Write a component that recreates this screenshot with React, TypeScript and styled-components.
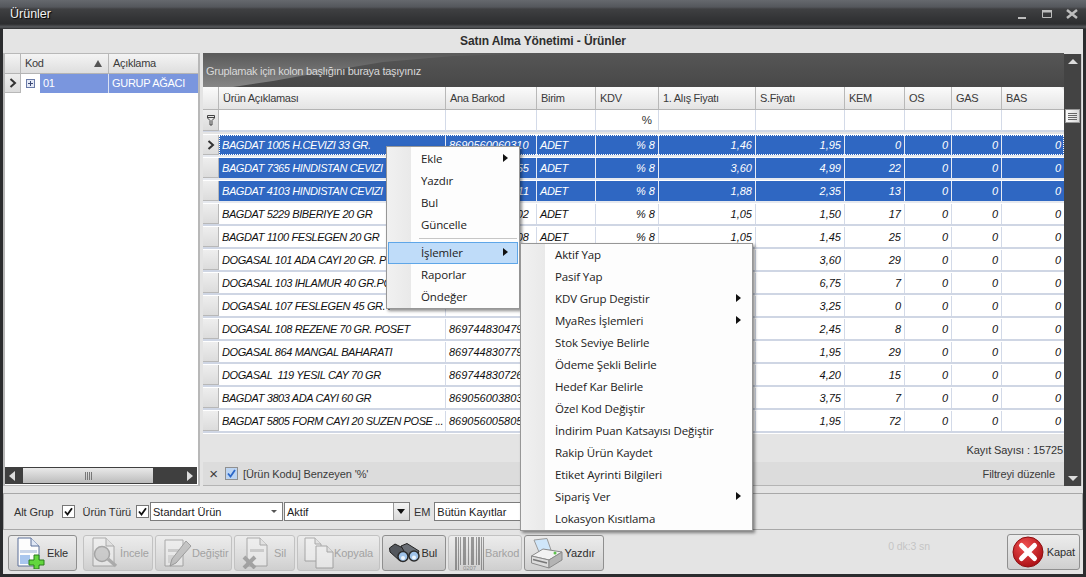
import React from "react";
import styled, { createGlobalStyle } from "styled-components";

const COLS = "16px 227px 91px 59px 63px 97px 89px 60px 47px 50px 62px";

// cells that sit behind the context menus are left empty
type RowData = {
  name: string;
  barcode: string;
  tail?: boolean;
  unit: boolean;
  buy: string;
  sell: string;
  kem: string;
};

const rows: RowData[] = [
  { name: "BAGDAT 1005 H.CEVIZI 33 GR.", barcode: "8690560060310", unit: true, buy: "1,46", sell: "1,95", kem: "0" },
  { name: "BAGDAT 7365 HINDISTAN CEVIZI", barcode: "55", tail: true, unit: true, buy: "3,60", sell: "4,99", kem: "22" },
  { name: "BAGDAT 4103 HINDISTAN CEVIZI", barcode: "11", tail: true, unit: true, buy: "1,88", sell: "2,35", kem: "13" },
  { name: "BAGDAT 5229 BIBERIYE 20 GR", barcode: "02", tail: true, unit: true, buy: "1,05", sell: "1,50", kem: "17" },
  { name: "BAGDAT 1100 FESLEGEN 20 GR", barcode: "08", tail: true, unit: true, buy: "1,05", sell: "1,45", kem: "25" },
  { name: "DOGASAL 101 ADA CAYI 20 GR. P", barcode: "", unit: false, buy: "", sell: "3,60", kem: "29" },
  { name: "DOGASAL 103 IHLAMUR 40 GR.PO", barcode: "", unit: false, buy: "", sell: "6,75", kem: "7" },
  { name: "DOGASAL 107 FESLEGEN 45 GR. P", barcode: "", unit: false, buy: "", sell: "3,25", kem: "0" },
  { name: "DOGASAL 108 REZENE 70 GR. POSET", barcode: "869744830479", unit: false, buy: "", sell: "2,45", kem: "8" },
  { name: "DOGASAL 864 MANGAL BAHARATI", barcode: "869744830779", unit: false, buy: "", sell: "1,95", kem: "29" },
  { name: "DOGASAL  119 YESIL CAY 70 GR", barcode: "869744830726", unit: false, buy: "", sell: "4,20", kem: "15" },
  { name: "BAGDAT 3803 ADA CAYI 60 GR", barcode: "869056003803", unit: false, buy: "", sell: "3,75", kem: "7" },
  { name: "BAGDAT 5805 FORM CAYI 20 SUZEN POSE ...", barcode: "869056005805", unit: false, buy: "", sell: "1,95", kem: "72" },
];

const submenuItems: [string, boolean][] = [
  ["Aktif Yap", false],
  ["Pasif Yap", false],
  ["KDV Grup Degistir", true],
  ["MyaRes İşlemleri", true],
  ["Stok Seviye Belirle", false],
  ["Ödeme Şekli Belirle", false],
  ["Hedef Kar Belirle", false],
  ["Özel Kod Değiştir", false],
  ["İndirim Puan Katsayısı Değiştir", false],
  ["Rakip Ürün Kaydet", false],
  ["Etiket Ayrinti Bilgileri", false],
  ["Sipariş Ver", true],
  ["Lokasyon Kısıtlama", false],
];

const Global = createGlobalStyle`
  html, body { margin: 0; padding: 0; background: #2b2c2e; }
  body { font-family: "Liberation Sans", Arial, sans-serif; font-size: 11px; letter-spacing: -0.1px; color: #333; }
`;

const Window = styled.div`
  position: relative;
  width: 1086px;
  height: 577px;
  overflow: hidden;
  display: flex;
  flex-direction: column;
  background: #2b2c2e;
`;

const TitleBar = styled.div`
  height: 29px;
  box-sizing: border-box;
  flex: none;
  display: flex;
  align-items: center;
  justify-content: space-between;
  padding: 0 7px 1px 10px;
  color: #f2f2f2;
  font-size: 12.5px;
  letter-spacing: 0;
  text-shadow: 1px 1px 1px #000;
  background: linear-gradient(#66696e 0, #54575c 7px, #3f4042 9px, #2c2d2f 24px, #57595c 27px, #2b2c2e 29px);
`;

const WinButtons = styled.div`
  display: flex;
  gap: 11px;
  align-items: center;
`;

const Body = styled.div`
  flex: 1;
  margin: 0 3px 3px;
  background: #e4e4e4;
  display: flex;
  flex-direction: column;
  min-height: 0;
`;

const Heading = styled.div`
  height: 24px;
  flex: none;
  text-align: center;
  line-height: 24px;
  font-weight: bold;
  font-size: 12px;
  color: #2e2e2e;
`;

const Main = styled.div`
  height: 433px;
  flex: none;
  display: flex;
  gap: 3px;
`;

const LeftPanel = styled.div`
  width: 197px;
  box-sizing: border-box;
  border: 1px solid #b8b8b8;
  border-width: 1px 2px 1px 2px;
  background: #fff;
  display: flex;
  flex-direction: column;
`;

const LeftHeader = styled.div`
  display: grid;
  grid-template-columns: 16px 88px 1fr;
  height: 19px;
  border-bottom: 1px solid #b4b4b4;
  background: linear-gradient(#f4f4f4, #dedede);
`;

const HeadCell = styled.div`
  box-sizing: border-box;
  padding: 0 4px;
  line-height: 19px;
  font-size: 11px;
  letter-spacing: -0.3px;
  color: #3a3a3a;
  white-space: nowrap;
  overflow: hidden;
  border-right: 1px solid #b8b8b8;
  display: flex;
  align-items: center;
  justify-content: space-between;
  &:last-child { border-right: 0; }
`;

const SortArrow = styled.span`
  width: 0;
  height: 0;
  border-left: 4px solid transparent;
  border-right: 4px solid transparent;
  border-bottom: 7px solid #555;
  margin-right: 2px;
`;

const LeftRow = styled.div`
  display: grid;
  grid-template-columns: 16px 19px 69px 1fr;
  height: 19px;
`;

const Indicator = styled.div`
  box-sizing: border-box;
  display: flex;
  align-items: center;
  justify-content: center;
  background: linear-gradient(#eeeeee, #dcdcdc);
  border-right: 1px solid #b8b8b8;
  border-bottom: 1px solid #b8b8b8;
`;

const Expander = styled.div`
  display: flex;
  align-items: center;
  justify-content: center;
`;

const LeftCell = styled.div`
  background: #7a96de;
  color: #fff;
  line-height: 19px;
  padding: 0 3px;
  font-size: 11px;
  letter-spacing: -0.3px;
  border-right: 1px solid #dbe2f3;
  white-space: nowrap;
  overflow: hidden;
  &:last-child { border-right: 0; }
`;

const LeftFill = styled.div`
  flex: 1;
`;

const HScroll = styled.div`
  height: 17px;
  margin: 0 1px 1px 0;
  background: #3f3f3f;
  display: flex;
  align-items: center;
  justify-content: space-between;
`;

const HThumb = styled.div`
  flex: 1;
  height: 15px;
  margin: 0 30px 0 4px;
  display: flex;
  align-items: center;
  justify-content: center;
  background: linear-gradient(#e9e9e9, #bcbcbc);
`;

const GripH = styled.div`
  width: 7px;
  height: 8px;
  background: repeating-linear-gradient(90deg, #777 0 1px, transparent 1px 2px);
`;

const ArrowBtn = styled.div<{ $dir: "left" | "right" }>`
  width: 0;
  height: 0;
  margin: 0 4px;
  border-top: 5px solid transparent;
  border-bottom: 5px solid transparent;
  ${(p) => (p.$dir === "left" ? "border-right: 6px solid #ddd;" : "border-left: 6px solid #ddd;")}
`;

const RightPanel = styled.div`
  flex: 1;
  display: flex;
  min-width: 0;
`;

const GridArea = styled.div`
  width: 861px;
  flex: none;
  display: flex;
  flex-direction: column;
`;

const GroupPanel = styled.div`
  height: 34px;
  flex: none;
  position: relative;
  overflow: hidden;
  background: linear-gradient(#565656, #484848);
  color: #d8d8d8;
  font-size: 11px;
  letter-spacing: -0.28px;
  line-height: 37px;
  padding-left: 3px;
  box-sizing: border-box;
  &::before {
    content: "";
    position: absolute;
    inset: 0;
    background: linear-gradient(#5a5a5a, #868686);
    clip-path: polygon(0 0, 337px 0, 250px 3px, 180px 9px, 120px 19px, 70px 28px, 30px 34px, 0 34px);
  }
`;

const GroupText = styled.span`
  position: relative;
`;

const GridHeader = styled.div`
  display: grid;
  grid-template-columns: ${COLS};
  height: 23px;
  flex: none;
  box-sizing: border-box;
  border-bottom: 1px solid #b4b4b4;
  border-top-right-radius: 5px;
  background: linear-gradient(#fbfbfb, #e4e4e4);
  ${HeadCell} { line-height: 22px; }
`;

const FilterRow = styled.div`
  display: grid;
  grid-template-columns: ${COLS};
  height: 22px;
  flex: none;
  box-sizing: border-box;
  background: #fff;
  border-bottom: 2px solid #cfd6e4;
  margin-bottom: 2px;
`;

const FilterCell = styled.div`
  border-right: 1px solid #d3dae8;
  text-align: right;
  padding-right: 6px;
  line-height: 21px;
  font-size: 11.5px;
  color: #333;
  &:last-child { border-right: 0; }
`;

const Rows = styled.div`
  flex: 1;
  display: flex;
  flex-direction: column;
  background: #fff;
  min-height: 0;
`;

const Row = styled.div<{ $selected?: boolean; $focus?: boolean }>`
  position: relative;
  display: grid;
  grid-template-columns: ${COLS};
  height: 23px;
  flex: none;
  box-sizing: border-box;
  border-top: 1px solid #fff;
  border-bottom: 2px solid ${(p) => (p.$selected ? "#e6e9ef" : "#cfd6e4")};
  color: ${(p) => (p.$selected ? "#fff" : "#111")};
  > div:not(:first-child) {
    background: ${(p) => (p.$selected ? "#2f67c2" : "#fff")};
    border-right-color: ${(p) => (p.$selected ? "#e6ebf5" : "#d3dae8")};
  }
  ${(p) =>
    p.$focus
      ? `&::after {
          content: "";
          position: absolute;
          inset: 0 0 0 16px;
          border: 1px dotted #fff;
        }`
      : ""}
`;

const Cell = styled.div<{ $right?: boolean; $tail?: boolean }>`
  box-sizing: border-box;
  padding: ${(p) => (p.$tail ? "0 7px 0 4px" : "0 3px")};
  line-height: 20px;
  font-style: italic;
  font-size: 11px;
  letter-spacing: -0.4px;
  white-space: pre;
  overflow: hidden;
  border-right: 1px solid #d3dae8;
  text-align: ${(p) => (p.$right || p.$tail ? "right" : "left")};
  &:last-child { border-right: 0; }
`;

const NumCell = styled(Cell)`
  letter-spacing: 0;
`;

const CountBar = styled.div`
  height: 28px;
  flex: none;
  display: flex;
  justify-content: flex-end;
  align-items: center;
  color: #333;
  font-size: 11px;
  padding: 3px 1px 0 0;
  box-sizing: border-box;
  background: #e4e4e4;
`;

const FilterStrip = styled.div`
  height: 24px;
  flex: none;
  display: flex;
  align-items: center;
  background: #dcdcdc;
  border-bottom: 1px solid #b4b4b4;
  padding: 0 9px 0 4px;
  box-sizing: border-box;
  font-size: 11px;
  color: #3b3b3b;
  gap: 5px;
`;

const CloseX = styled.span`
  font-size: 15px;
  line-height: 15px;
  width: 13px;
  text-align: center;
`;

const Spacer = styled.div`
  flex: 1;
`;

const CheckBlue = styled.span`
  width: 13px;
  height: 13px;
  box-sizing: border-box;
  border: 1px solid #8f8f8f;
  background: #fff;
  display: inline-flex;
  align-items: center;
  justify-content: center;
`;

const VScroll = styled.div`
  width: 17px;
  flex: none;
  margin: 1px 2px 0 0;
  border-right: 1px solid #c8c8c8;
  background: #434343;
  display: flex;
  flex-direction: column;
  align-items: center;
`;

const ScrollUp = styled.div`
  margin-top: 5px;
  width: 0;
  height: 0;
  border-left: 5px solid transparent;
  border-right: 5px solid transparent;
  border-bottom: 5px solid #ddd;
`;

const VThumb = styled.div`
  margin-top: 45px;
  width: 15px;
  height: 14px;
  display: flex;
  align-items: center;
  justify-content: center;
  background: linear-gradient(90deg, #fafafa, #d8d8d8);
  border: 1px solid #999;
  box-sizing: border-box;
`;

const GripV = styled.div`
  width: 9px;
  height: 7px;
  background: repeating-linear-gradient(180deg, #666 0 1px, transparent 1px 2px);
`;

const ScrollDown = styled.div`
  margin-top: auto;
  margin-bottom: 5px;
  width: 0;
  height: 0;
  border-left: 5px solid transparent;
  border-right: 5px solid transparent;
  border-top: 5px solid #ddd;
`;

const OptionBar = styled.div`
  height: 37px;
  flex: none;
  margin: 7px 0 0 0;
  box-sizing: border-box;
  border: 1px solid #a8a8a8;
  display: flex;
  align-items: center;
  padding-left: 10px;
  font-size: 11px;
  color: #333;
`;

const OptLabel = styled.span<{ $ml?: number }>`
  margin-left: ${(p) => p.$ml ?? 0}px;
`;

const CheckBox = styled.span<{ $ml: number }>`
  margin-left: ${(p) => p.$ml}px;
  width: 11px;
  height: 11px;
  border: 1px solid #777;
  background: #fff;
  display: inline-flex;
  align-items: center;
  justify-content: center;
`;

const Select = styled.div<{ $w: number; $ml: number }>`
  width: ${(p) => p.$w}px;
  margin-left: ${(p) => p.$ml}px;
  height: 19px;
  box-sizing: border-box;
  border: 1px solid #7c7c7c;
  background: #fff;
  display: flex;
  align-items: center;
  justify-content: space-between;
  padding-left: 2px;
  font-size: 11px;
  letter-spacing: 0;
  color: #222;
  white-space: nowrap;
  overflow: hidden;
`;

const SmallCaret = styled.span`
  width: 0;
  height: 0;
  margin-right: 5px;
  border-left: 3px solid transparent;
  border-right: 3px solid transparent;
  border-top: 3px solid #555;
`;

const DropBtn = styled.span`
  width: 15px;
  height: 17px;
  background: linear-gradient(#f4f4f4, #d9d9d9);
  border-left: 1px solid #999;
  display: flex;
  align-items: center;
  justify-content: center;
`;

const BigCaret = styled.span`
  width: 0;
  height: 0;
  border-left: 4px solid transparent;
  border-right: 4px solid transparent;
  border-top: 5px solid #111;
`;

const Toolbar = styled.div`
  flex: 1;
  display: flex;
  align-items: flex-start;
  padding: 5px 3px 0 5px;
  gap: 2px;
`;

const ToolBtn = styled.div<{ $w: number; $off?: boolean; $active?: boolean; $first?: boolean }>`
  width: ${(p) => p.$w}px;
  height: 36px;
  box-sizing: border-box;
  flex: none;
  border: 1px solid ${(p) => (p.$off ? "#c2c2c2" : "#8f8f8f")};
  border-radius: 3px;
  margin-right: ${(p) => (p.$first ? 4 : 0)}px;
  background: ${(p) =>
    p.$active
      ? "linear-gradient(#e2e2e2, #c4c4c4)"
      : "linear-gradient(#ececec, #dcdcdc 60%, #cfcfcf)"};
  display: flex;
  align-items: center;
  justify-content: space-between;
  padding: 0 8px 0 6px;
  font-size: 11px;
  color: ${(p) => (p.$off ? "#a2a2a2" : "#2e2e2e")};
  white-space: nowrap;
  overflow: hidden;
  svg { flex: none; opacity: ${(p) => (p.$off ? 0.55 : 1)}; }
`;

const Timer = styled.div`
  margin-left: auto;
  margin-right: 75px;
  margin-top: 5px;
  color: #c4c4c4;
  font-size: 10.5px;
`;

const KapatBtn = styled(ToolBtn)`
  margin-top: -1px;
  padding: 0 4px;
`;

const Menu = styled.div<{ $x: number; $y: number; $w: number; $top: number }>`
  position: absolute;
  left: ${(p) => p.$x}px;
  top: ${(p) => p.$y}px;
  width: ${(p) => p.$w}px;
  box-sizing: border-box;
  padding: ${(p) => p.$top}px 1px 0;
  border: 1px solid #979797;
  box-shadow: 2px 2px 3px rgba(0, 0, 0, 0.45);
  background: linear-gradient(90deg, #f1f1f1 0, #e9e9e9 24px, #fdfdfd 24px);
  font-family: "Open Sans", "Noto Sans", sans-serif;
  font-size: 11.5px;
  letter-spacing: -0.12px;
  color: #222;
  z-index: 2;
`;

const MenuItem = styled.div<{ $hover?: boolean }>`
  height: 22px;
  box-sizing: border-box;
  padding: 0 10px 2px 33px;
  display: flex;
  align-items: center;
  justify-content: space-between;
  white-space: nowrap;
  ${(p) => (p.$hover ? "background: #bfdcf9; outline: 1px solid #5ea6e8; outline-offset: -1px;" : "")}
`;

const MenuArrow = styled.span`
  width: 0;
  height: 0;
  border-top: 4px solid transparent;
  border-bottom: 4px solid transparent;
  border-left: 5px solid #111;
`;

const MenuSep = styled.div`
  height: 6px;
  position: relative;
  &::after {
    content: "";
    position: absolute;
    left: 31px;
    right: 1px;
    top: 2px;
    height: 1px;
    background: #c6c6c6;
  }
`;

const RowArrow = () => (
  <svg width="8" height="10" viewBox="0 0 8 10">
    <path d="M1.5 1 L6 5 L1.5 9" fill="none" stroke="#333" strokeWidth="2" />
  </svg>
);

const Tick = () => (
  <svg width="9" height="9" viewBox="0 0 9 9">
    <path d="M1 4.5 L3.5 7.5 L8 1.2" fill="none" stroke="#111" strokeWidth="1.8" />
  </svg>
);

const EkleIcon = () => (
  <svg width="30" height="32" viewBox="0 0 30 32">
    <path d="M3 1 H16 L24 9 V29 H3 Z" fill="#fdfdfd" stroke="#5b6f98" />
    <path d="M16 1 V9 H24" fill="#dfe7f5" stroke="#5b6f98" />
    <rect x="5" y="13" width="17" height="3" fill="#c8d4e8" />
    <rect x="5" y="18" width="10" height="9" fill="#a9c6ee" />
    <path d="M19 18 h5 v5 h5 v5 h-5 v4 h-5 v-4 h-5 v-5 h5 Z" fill="#63d63e" stroke="#2b7d1a" />
  </svg>
);

const IncelIcon = () => (
  <svg width="30" height="32" viewBox="0 0 30 32">
    <path d="M3 1 H16 L24 9 V29 H3 Z" fill="#f1f1f1" stroke="#777" />
    <path d="M16 1 V9 H24" fill="#ddd" stroke="#777" />
    <circle cx="12" cy="17" r="7.5" fill="#bbb" stroke="#777" strokeWidth="1.5" />
    <path d="M18 22 L26 29" stroke="#888" strokeWidth="3.5" />
  </svg>
);

const DegistirIcon = () => (
  <svg width="30" height="32" viewBox="0 0 30 32">
    <path d="M3 3 H21 V29 H3 Z" fill="#f1f1f1" stroke="#777" />
    <rect x="6" y="12" width="12" height="3" fill="#bbb" />
    <rect x="6" y="18" width="6" height="8" fill="#ccc" />
    <path d="M24 4 L29 9 L14 26 L8 29 L10 22 Z" fill="#aaa" stroke="#666" />
  </svg>
);

const SilIcon = () => (
  <svg width="30" height="32" viewBox="0 0 30 32">
    <path d="M6 1 H19 L26 8 V29 H6 Z" fill="#f1f1f1" stroke="#777" />
    <path d="M19 1 V8 H26" fill="#ddd" stroke="#777" />
    <rect x="9" y="12" width="14" height="3" fill="#bbb" />
    <path d="M3 20 L14 31 M14 20 L3 31" stroke="#777" strokeWidth="4" />
  </svg>
);

const KopyalaIcon = () => (
  <svg width="30" height="32" viewBox="0 0 30 32">
    <path d="M1 1 H11 L17 7 V24 H1 Z" fill="#f4f4f4" stroke="#777" />
    <path d="M11 1 V7 H17" fill="#ddd" stroke="#777" />
    <path d="M12 9 H23 L29 15 V31 H12 Z" fill="#f4f4f4" stroke="#777" />
    <path d="M23 9 V15 H29" fill="#ddd" stroke="#777" />
  </svg>
);

const BulIcon = () => (
  <svg width="31" height="20" viewBox="0 0 31 20">
    <path d="M0.5 5 L6 1 L18 7 L19 14 L11 18 L1 9 Z" fill="#53575d" stroke="#222" />
    <path d="M12 3 L18 0.5 L30 8 L28 14 L18 13 Z" fill="#6a6f76" stroke="#222" />
    <circle cx="14" cy="13.5" r="5" fill="#9fc3ea" stroke="#2c2c2c" strokeWidth="1.5" />
    <circle cx="25" cy="13" r="5" fill="#9fc3ea" stroke="#2c2c2c" strokeWidth="1.5" />
    <circle cx="14" cy="15" r="2" fill="#eef5fc" />
    <circle cx="25" cy="14.5" r="2" fill="#eef5fc" />
  </svg>
);

const BarkodIcon = () => (
  <svg width="30" height="33" viewBox="0 0 30 33">
    {[0, 3, 5, 8, 10, 13, 16, 18, 21, 23, 26, 28].map((x, i) => (
      <rect key={x} x={x} y="0" width={i % 3 === 0 ? 2 : 1} height={x > 4 && x < 24 ? 28 : 33} fill="#555" />
    ))}
    <text x="8" y="33" fontSize="6" fill="#555" fontFamily="Liberation Sans">0207</text>
  </svg>
);

const YazdirIcon = () => (
  <svg width="32" height="31" viewBox="0 0 32 31">
    <path d="M3 2 L16 0.5 L20 12 L8 14 Z" fill="#cfe6fa" stroke="#9a9a9a" />
    <path d="M0.5 18 L12 11 L31 14 L18 22 Z" fill="#f2f2f2" stroke="#8a8a8a" />
    <path d="M0.5 18 L18 22 V30 L0.5 25 Z" fill="#dcdcdc" stroke="#8a8a8a" />
    <path d="M18 22 L31 14 V22 L18 30 Z" fill="#b4b4b4" stroke="#8a8a8a" />
    <path d="M2 21.5 L16 25" stroke="#777" strokeWidth="1.5" />
    <circle cx="24" cy="15" r="1.5" fill="#5cc24a" />
  </svg>
);

const KapatIcon = () => (
  <svg width="32" height="32" viewBox="0 0 32 32">
    <defs>
      <radialGradient id="kapat" cx="40%" cy="30%" r="75%">
        <stop offset="0" stopColor="#f05050" />
        <stop offset="1" stopColor="#a80d12" />
      </radialGradient>
    </defs>
    <circle cx="16" cy="16" r="15" fill="url(#kapat)" stroke="#8c0f12" />
    <path d="M9.5 9.5 L22.5 22.5 M22.5 9.5 L9.5 22.5" stroke="#fff" strokeWidth="5" strokeLinecap="round" />
  </svg>
);

const FunnelIcon = () => (
  <svg width="8" height="11" viewBox="0 0 8 11">
    <path d="M.5 .5 H7.5 V3 L5 5.5 V10 H3 V5.5 L.5 3 Z M.5 2.5 H7.5" fill="none" stroke="#444" />
  </svg>
);

function App() {
  return (
    <Window>
      <Global />
      <TitleBar>
        <span>Ürünler</span>
        <WinButtons>
          <svg width="14" height="14" viewBox="0 0 14 14">
            <rect x="3" y="10" width="8" height="2" fill="#bdbdbd" />
          </svg>
          <svg width="14" height="14" viewBox="0 0 14 14">
            <path d="M2.5 3.5 H11.5 V10.5 H2.5 Z" fill="none" stroke="#bdbdbd" />
            <rect x="2" y="3" width="10" height="2.5" fill="#bdbdbd" />
          </svg>
          <svg width="14" height="14" viewBox="0 0 14 14">
            <path d="M2 3 L12 11 M12 3 L2 11" stroke="#bdbdbd" strokeWidth="2.5" />
          </svg>
        </WinButtons>
      </TitleBar>
      <Body>
        <Heading>Satın Alma Yönetimi - Ürünler</Heading>
        <Main>
          <LeftPanel>
            <LeftHeader>
              <HeadCell />
              <HeadCell>
                Kod <SortArrow />
              </HeadCell>
              <HeadCell>Açıklama</HeadCell>
            </LeftHeader>
            <LeftRow>
              <Indicator>
                <RowArrow />
              </Indicator>
              <Expander>
                <svg width="9" height="9" viewBox="0 0 9 9">
                  <rect x=".5" y=".5" width="8" height="8" fill="#e4e9f5" stroke="#6a7ba8" />
                  <path d="M2 4.5 H7 M4.5 2 V7" stroke="#3c4a78" />
                </svg>
              </Expander>
              <LeftCell>01</LeftCell>
              <LeftCell>GURUP AĞACI</LeftCell>
            </LeftRow>
            <LeftFill />
            <HScroll>
              <ArrowBtn $dir="left" />
              <HThumb>
                <GripH />
              </HThumb>
              <ArrowBtn $dir="right" />
            </HScroll>
          </LeftPanel>
          <RightPanel>
            <GridArea>
              <GroupPanel>
                <GroupText>Gruplamak için kolon başlığını buraya taşıyınız</GroupText>
              </GroupPanel>
              <GridHeader>
                <HeadCell />
                <HeadCell>Ürün Açıklaması</HeadCell>
                <HeadCell>Ana Barkod</HeadCell>
                <HeadCell>Birim</HeadCell>
                <HeadCell>KDV</HeadCell>
                <HeadCell>1. Alış Fiyatı</HeadCell>
                <HeadCell>S.Fiyatı</HeadCell>
                <HeadCell>KEM</HeadCell>
                <HeadCell>OS</HeadCell>
                <HeadCell>GAS</HeadCell>
                <HeadCell>BAS</HeadCell>
              </GridHeader>
              <FilterRow>
                <Indicator>
                  <FunnelIcon />
                </Indicator>
                <FilterCell />
                <FilterCell />
                <FilterCell />
                <FilterCell>%</FilterCell>
                <FilterCell />
                <FilterCell />
                <FilterCell />
                <FilterCell />
                <FilterCell />
                <FilterCell />
              </FilterRow>
              <Rows>
                {rows.map((r, i) => (
                  <Row key={r.name} $selected={i < 3} $focus={i === 0}>
                    <Indicator>{i === 0 && <RowArrow />}</Indicator>
                    <Cell>{r.name}</Cell>
                    <NumCell $tail={r.tail}>{r.barcode}</NumCell>
                    <Cell>{r.unit ? "ADET" : ""}</Cell>
                    <NumCell $right>{r.unit ? "% 8" : ""}</NumCell>
                    <NumCell $right>{r.buy}</NumCell>
                    <NumCell $right>{r.sell}</NumCell>
                    <NumCell $right>{r.kem}</NumCell>
                    <NumCell $right>0</NumCell>
                    <NumCell $right>0</NumCell>
                    <NumCell $right>0</NumCell>
                  </Row>
                ))}
              </Rows>
              <CountBar>Kayıt Sayısı : 15725</CountBar>
              <FilterStrip>
                <CloseX>×</CloseX>
                <CheckBlue>
                  <svg width="11" height="11" viewBox="0 0 11 11">
                    <rect width="11" height="11" fill="#bcd4f2" />
                    <path d="M2 5.5 L4.5 8.5 L9 2" fill="none" stroke="#2a66c8" strokeWidth="1.8" />
                  </svg>
                </CheckBlue>
                <span>[Ürün Kodu] Benzeyen '%'</span>
                <Spacer />
                <span>Filtreyi düzenle</span>
              </FilterStrip>
            </GridArea>
            <VScroll>
              <ScrollUp />
              <VThumb>
                <GripV />
              </VThumb>
              <ScrollDown />
            </VScroll>
          </RightPanel>
        </Main>
        <OptionBar>
          <OptLabel>Alt Grup</OptLabel>
          <CheckBox $ml={8}>
            <Tick />
          </CheckBox>
          <OptLabel $ml={8}>Ürün Türü</OptLabel>
          <CheckBox $ml={5}>
            <Tick />
          </CheckBox>
          <Select $w={133} $ml={1}>
            Standart Ürün
            <SmallCaret />
          </Select>
          <Select $w={126} $ml={1}>
            Aktif
            <DropBtn>
              <BigCaret />
            </DropBtn>
          </Select>
          <OptLabel $ml={4}>EM</OptLabel>
          <Select $w={90} $ml={4}>
            Bütün Kayıtlar
          </Select>
        </OptionBar>
        <Toolbar>
          <ToolBtn $w={69} $first>
            <EkleIcon />
            Ekle
          </ToolBtn>
          <ToolBtn $w={70} $off>
            <IncelIcon />
            İncele
          </ToolBtn>
          <ToolBtn $w={77} $off>
            <DegistirIcon />
            Değiştir
          </ToolBtn>
          <ToolBtn $w={61} $off>
            <SilIcon />
            Sil
          </ToolBtn>
          <ToolBtn $w={83} $off>
            <KopyalaIcon />
            Kopyala
          </ToolBtn>
          <ToolBtn $w={64} $active>
            <BulIcon />
            Bul
          </ToolBtn>
          <ToolBtn $w={74} $off>
            <BarkodIcon />
            Barkod
          </ToolBtn>
          <ToolBtn $w={80}>
            <YazdirIcon />
            Yazdır
          </ToolBtn>
          <Timer>0 dk:3 sn</Timer>
          <KapatBtn $w={73}>
            <KapatIcon />
            Kapat
          </KapatBtn>
        </Toolbar>
      </Body>
      <Menu $x={386} $y={146} $w={134} $top={1}>
        <MenuItem>
          Ekle <MenuArrow />
        </MenuItem>
        <MenuItem>Yazdır</MenuItem>
        <MenuItem>Bul</MenuItem>
        <MenuItem>Güncelle</MenuItem>
        <MenuSep />
        <MenuItem $hover>
          İşlemler <MenuArrow />
        </MenuItem>
        <MenuItem>Raporlar</MenuItem>
        <MenuItem>Öndeğer</MenuItem>
      </Menu>
      <Menu $x={520} $y={243} $w={233} $top={0}>
        {submenuItems.map(([label, sub]) => (
          <MenuItem key={label}>
            {label}
            {sub && <MenuArrow />}
          </MenuItem>
        ))}
      </Menu>
    </Window>
  );
}

export default App;
